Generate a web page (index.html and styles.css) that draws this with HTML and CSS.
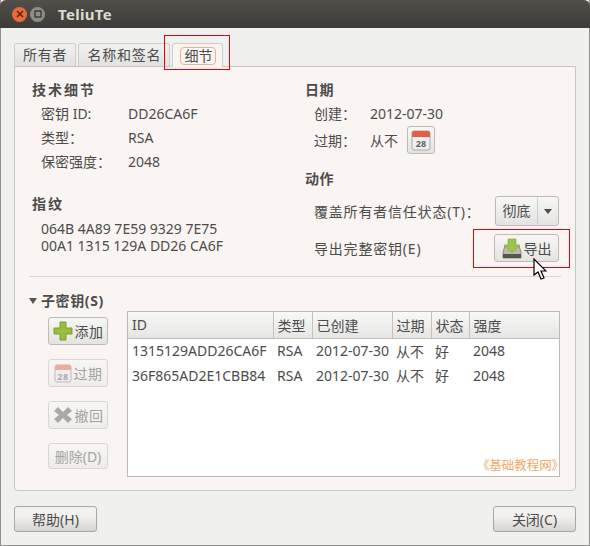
FILE: index.html
```html
<!DOCTYPE html>
<html lang="zh-CN">
<head>
    <meta charset="UTF-8">
    <title>TeliuTe</title>
    <link rel="stylesheet" href="styles.css">
</head>
<body>
    <div class="window">
        <div class="titlebar">
            <span class="win-btn close">
                <svg width="10" height="10" viewBox="0 0 10 10"><path d="M2 2l6 6M8 2l-6 6" stroke="#5a2410" stroke-width="1.6" fill="none"/></svg>
            </span>
            <span class="win-btn mini">
                <svg width="10" height="10" viewBox="0 0 10 10"><rect x="2" y="2" width="6" height="6" stroke="#2e2d28" stroke-width="1.2" fill="none"/></svg>
            </span>
            <span class="win-title">TeliuTe</span>
        </div>

        <div class="body">
            <div class="tabs">
                <div class="tab">所有者</div>
                <div class="tab">名称和签名</div>
                <div class="tab active"><span class="tab-focus">细节</span></div>
            </div>

            <div class="panel">
                <div class="top">
                    <div class="col-left">
                        <h3>技术细节</h3>
                        <div class="info"><span class="key">密钥 ID:</span><span>DD26CA6F</span></div>
                        <div class="info"><span class="key">类型：</span><span>RSA</span></div>
                        <div class="info"><span class="key">保密强度：</span><span>2048</span></div>
                        <h3 class="finger-title">指纹</h3>
                        <div class="finger">064B 4A89 7E59 9329 7E75<br>00A1 1315 129A DD26 CA6F</div>
                    </div>
                    <div class="col-right">
                        <h3>日期</h3>
                        <div class="info"><span class="key short">创建：</span><span>2012-07-30</span></div>
                        <div class="info expire">
                            <span class="key short">过期：</span><span>从不</span>
                            <button class="btn cal-btn">
                                <svg width="20" height="22" viewBox="0 0 20 22"><rect x="1" y="2" width="18" height="19" rx="2" fill="#eee" stroke="#aaa"/><path d="M1 8V4a2 2 0 0 1 2-2h14a2 2 0 0 1 2 2v4z" fill="#e0604a"/><text x="10" y="18" class="cal-num">28</text></svg>
                            </button>
                        </div>
                        <h3 class="action-title">动作</h3>
                        <div class="action-row">
                            <span>覆盖所有者信任状态(T)：</span>
                            <div class="btn combo"><span class="combo-text">彻底</span><span class="combo-arrow"></span></div>
                        </div>
                        <div class="action-row export-row">
                            <span>导出完整密钥(E)</span>
                            <button class="btn export-btn">
                                <svg width="20" height="22" viewBox="0 0 20 22"><path d="M3 9h14l2 6v6H1v-6z" fill="#b9b9b0" stroke="#8e8e86"/><rect x="1" y="17" width="18" height="4" fill="#55554f"/><path d="M6 2h8v6h4l-8 8-8-8h4z" fill="#9cc34a" stroke="#7fa336" stroke-width=".6"/></svg>
                                导出
                            </button>
                        </div>
                    </div>
                </div>

                <div class="sep"></div>

                <div class="sub-title"><span class="arrow-down"></span>子密钥(S)</div>
                <div class="sub-main">
                    <div class="side-btns">
                        <button class="btn side">
                            <svg width="20" height="20" viewBox="0 0 20 20"><path d="M7 1h6v6h6v6h-6v6H7v-6H1V7h6z" fill="#97bf3d" stroke="#7c9f2f"/></svg>
                            添加
                        </button>
                        <button class="btn side off">
                            <svg width="18" height="20" viewBox="0 0 18 20"><rect x="1" y="2" width="16" height="17" rx="2" fill="#eee" stroke="#bbb"/><path d="M1 7V4a2 2 0 0 1 2-2h12a2 2 0 0 1 2 2v3z" fill="#eeaa9e"/><text x="9" y="16.500" class="cal-num faded">28</text></svg>
                            过期
                        </button>
                        <button class="btn side off">
                            <svg width="20" height="20" viewBox="0 0 20 20"><path d="M5 2l5 5 5-5 4 4-5 4 5 4-4 4-5-5-5 5-4-4 5-4-5-4z" fill="#a9a9a5"/></svg>
                            撤回
                        </button>
                        <button class="btn side off del">删除(D)</button>
                    </div>

                    <div class="table-box">
                        <table>
                            <thead>
                                <tr>
                                    <th class="c-id">ID</th>
                                    <th class="c-type">类型</th>
                                    <th class="c-date">已创建</th>
                                    <th class="c-exp">过期</th>
                                    <th class="c-state">状态</th>
                                    <th>强度</th>
                                </tr>
                            </thead>
                            <tbody>
                                <tr><td>1315129ADD26CA6F</td><td>RSA</td><td>2012-07-30</td><td>从不</td><td>好</td><td>2048</td></tr>
                                <tr><td>36F865AD2E1CBB84</td><td>RSA</td><td>2012-07-30</td><td>从不</td><td>好</td><td>2048</td></tr>
                            </tbody>
                        </table>
                        <div class="watermark">《基础教程网》</div>
                    </div>
                </div>
            </div>

            <div class="footer">
                <button class="btn foot">帮助(H)</button>
                <button class="btn foot">关闭(C)</button>
            </div>
        </div>

        <!-- red boxes and mouse pointer drawn over the screenshot -->
        <div class="mark mark-tab"></div>
        <div class="mark mark-export"></div>
        <svg class="pointer" width="14" height="22" viewBox="0 0 14 22"><path d="M1 1v16l4-3 3 7 3-1-3-7h5z" fill="#fff" stroke="#000" stroke-width="1.2"/></svg>
    </div>
</body>
</html>
```

FILE: styles.css
```css
* {
    box-sizing: border-box;
    margin: 0;
    padding: 0;
}

html, body {
    width: 590px;
    height: 546px;
    overflow: hidden;
    background: #f2f1f0;
}

body {
    font-family: "Noto Sans", "Noto Sans CJK SC", sans-serif;
    font-size: 14px;
    color: #4c4c4c;
}

.window {
    position: relative;
    width: 590px;
    height: 546px;
    display: flex;
    flex-direction: column;
    background: #f0f0ee;
    border: 1px solid #8f8f8c;
    border-top: none;
}

.titlebar {
    height: 28px;
    flex: none;
    margin: 0 -1px;
    display: flex;
    align-items: center;
    padding-left: 12px;
    background: linear-gradient(#504f4a, #3c3b37);
    border-radius: 6px 6px 0 0;
}

.win-btn {
    width: 15px;
    height: 15px;
    border-radius: 50%;
    margin-right: 3px;
    display: flex;
    align-items: center;
    justify-content: center;
}

.close { background: #ec6a3a; }
.mini { background: #8e8d86; }

.win-title {
    margin-left: 10px;
    font-weight: bold;
    font-size: 15px;
    letter-spacing: .3px;
    color: #dfdbd2;
}

.body {
    flex: 1;
    display: flex;
    flex-direction: column;
    padding: 15px 13px 13px;
}

.tabs {
    display: flex;
    height: 23px;
    gap: 2px;
}

.tab {
    height: 23px;
    padding: 0 8px;
    line-height: 22px;
    font-size: 14px;
    letter-spacing: .8px;
    background: linear-gradient(#f2f2f0, #e2e1df);
    border: 1px solid #cfcdca;
    border-bottom: none;
    border-radius: 3px 3px 0 0;
}

.tab.active {
    height: 24px;
    padding: 3px 6px 0 7px;
    background: #faf5f2;
    position: relative;
    z-index: 1;
    line-height: 16px;
    letter-spacing: 0;
}

.tab-focus {
    display: block;
    padding: 0 3px;
    height: 18px;
    border: 1px solid #eeb095;
    border-radius: 4px;
}

.panel {
    height: 425px;
    padding: 13px 15px 0 17px;
    background: #faf5f2;
    border: 1px solid #c9c6c2;
    border-radius: 0 0 4px 4px;
}

.top {
    display: grid;
    grid-template-columns: 273px 1fr;
    height: 183px;
}

h3 {
    font-size: 14px;
    line-height: 20px;
    font-weight: bold;
    letter-spacing: 2px;
}

.col-right h3 { letter-spacing: .5px; }

.info {
    display: flex;
    align-items: center;
    height: 24px;
    padding-left: 9px;
}

h3 + .info { margin-top: 1px; }

.key { width: 87px; }
.key.short { width: 56px; }

.finger-title { margin-top: 21px; }

.finger {
    margin-top: 6px;
    padding-left: 9px;
    line-height: 17px;
}

.expire {
    height: 30px;
}

.btn {
    font-family: inherit;
    font-size: 14px;
    color: #4c4c4c;
    background: linear-gradient(#f7f7f6, #e4e3e1);
    border: 1px solid #bdbbb7;
    border-radius: 3px;
    display: flex;
    align-items: center;
    justify-content: center;
}

.cal-btn {
    width: 28px;
    height: 28px;
    margin-left: 9px;
}

.cal-num {
    font-size: 9px;
    font-weight: bold;
    fill: #666;
    text-anchor: middle;
}

.cal-num.faded { fill: #aaa; }

.action-title { margin-top: 14px; }

.action-row {
    display: flex;
    align-items: center;
    justify-content: space-between;
    padding-left: 9px;
    padding-right: 1px;
    height: 30px;
    margin-top: 7px;
    letter-spacing: .8px;
}

.combo {
    width: 64px;
    height: 30px;
    justify-content: flex-start;
    letter-spacing: 0;
}

.combo-text {
    width: 42px;
    text-align: center;
    border-right: 1px solid #cfcdca;
    line-height: 26px;
}

.combo-arrow {
    margin-left: 6px;
    border: 4px solid transparent;
    border-top: 5px solid #4c4c4c;
    border-bottom: none;
}

.export-btn {
    width: 65px;
    height: 28px;
    gap: 2px;
    letter-spacing: 0;
}

.sep {
    height: 1px;
    margin: 13px -1px 0 -3px;
    background: #d8d5d2;
}

.sub-title {
    margin-top: 14px;
    height: 20px;
    line-height: 20px;
    font-weight: bold;
    letter-spacing: .6px;
    display: flex;
    align-items: center;
}

.arrow-down {
    margin: 0 4px 0 -3px;
    border: 4px solid transparent;
    border-top: 6px solid #55534f;
    border-bottom: none;
}

.sub-main {
    display: flex;
}

.side-btns {
    width: 96px;
    padding-top: 6px;
    padding-left: 16px;
    display: flex;
    flex-direction: column;
    gap: 14px;
}

.side {
    width: 60px;
    height: 28px;
    gap: 2px;
    letter-spacing: .5px;
    flex: none;
}

.off {
    color: #a5a3a0;
    border-color: #d8d6d3;
    background: linear-gradient(#f8f6f4, #efedeb);
}

.del { height: 26px; letter-spacing: 0; }

.table-box {
    position: relative;
    width: 433px;
    height: 166px;
    background: #fff;
    border: 1px solid #bdbbb7;
}

table {
    border-collapse: collapse;
    table-layout: fixed;
    width: 431px;
}

th {
    height: 26px;
    font-weight: normal;
    text-align: left;
    padding-left: 4px;
    background: linear-gradient(#f8f8f7, #e6e5e3);
    border-right: 1px solid #c4c2be;
    border-bottom: 1px solid #bdbbb7;
}

th:last-child { border-right: none; }

td {
    padding-left: 4px;
    height: 24px;
    white-space: nowrap;
}

tbody tr:first-child td { height: 25px; }

.c-id { width: 145px; }
.c-type { width: 39px; }
.c-date { width: 80px; }
.c-exp { width: 39px; }
.c-state { width: 38px; }

.watermark {
    position: absolute;
    right: 1px;
    bottom: 2px;
    font-size: 12.5px;
    line-height: 16px;
    font-feature-settings: "palt";
    color: #f5a765;
}

.footer {
    display: flex;
    justify-content: space-between;
    margin-top: 15px;
}

.foot {
    width: 83px;
    height: 26px;
    background: linear-gradient(#f2f1f0 40%, #d6d4d1);
    border-color: #a9a7a3;
}

.mark {
    position: absolute;
    border: 1px solid #e8000f;
}

.mark-tab {
    left: 163px;
    top: 35px;
    width: 66px;
    height: 35px;
}

.mark-export {
    left: 472px;
    top: 229px;
    width: 97px;
    height: 39px;
}

.pointer {
    position: absolute;
    left: 532px;
    top: 258px;
}
```
